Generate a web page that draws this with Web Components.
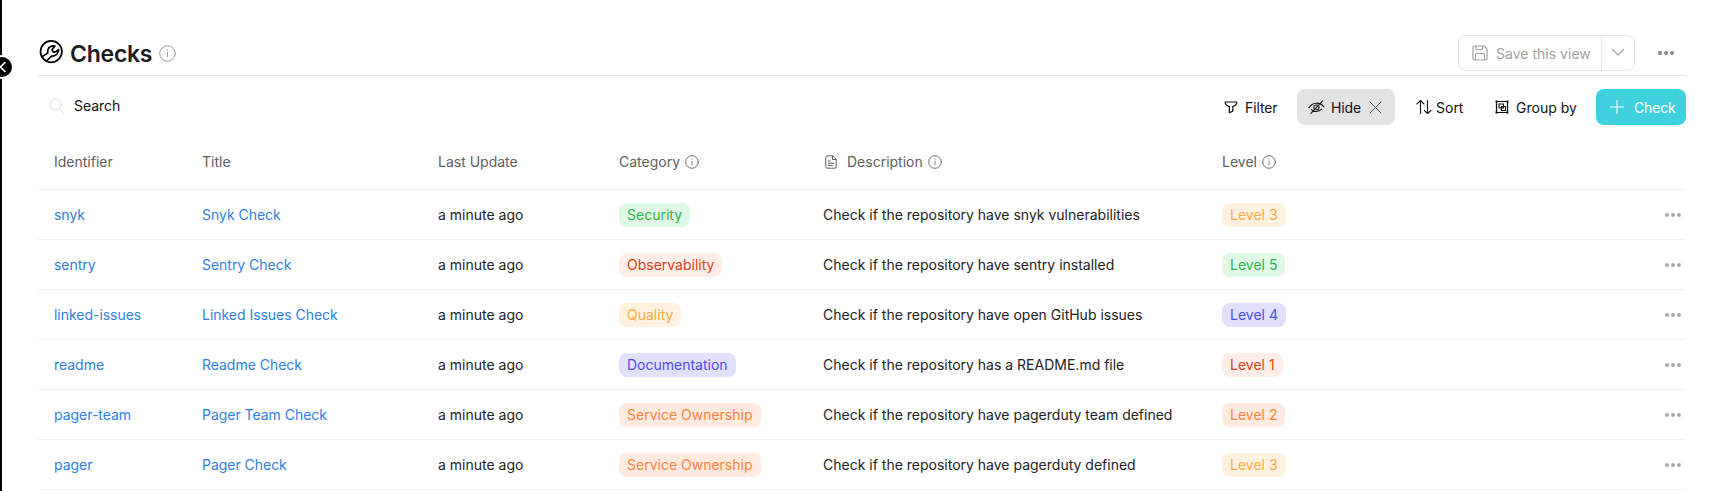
<!DOCTYPE html>
<html lang="en">
<head>
<meta charset="utf-8">
<title>Checks</title>
<style>
body{margin:0;background:#fff;font:14px/20px Inter,"Liberation Sans",sans-serif;color:#222;overflow:hidden}
</style>
</head>
<body>
<checks-page></checks-page>
<script>
const svg = (w, h, sw, body) => `<svg width="${w}" height="${h}" viewBox="0 0 ${w} ${h}" fill="none" stroke="currentColor" stroke-width="${sw}" stroke-linecap="round" stroke-linejoin="round">${body}</svg>`;
const ICONS = {
  wrench: svg(24, 24, 1.7, '<circle cx="12.2" cy="11.600" r="10.7"/><path d="M2.800 16.800L8 13.600C9.400 12.800 8.200 11.400 9.200 9C10.200 6.800 13 5.600 16 6L12.900 9.800L14.400 12.200L17 11.600L19.600 9.600C19.600 13.200 17 16.200 12.600 16.200L7.400 21"/>'),
  info17: svg(17, 17, 1, '<circle cx="8.5" cy="8.5" r="7.8"/><path d="M8.5 7.400v4.500M8.500 4.900v.3"/>'),
  info: svg(14, 14, 0.9, '<circle cx="7" cy="7" r="6.3"/><path d="M7 6.200v3.700M7 4v.2" stroke-width=".8"/>'),
  search: svg(16, 16, 1, '<circle cx="6.5" cy="6.5" r="5.6"/><path d="M10.6 10.6L15 15"/>'),
  filter: svg(14, 14, 1.2, '<path d="M1.2 2h11.6c.2 2-1.600 3.600-4 4.600v4.600L5.400 12.600V6.600C2.800 5.600 1 4 1.200 2z"/>'),
  hide: svg(17, 14, 1.1, '<path d="M1 7.600C4.400 2 11.800 1.600 16 7M3.400 9.600C5.400 11.800 10 12.600 13.800 9.200M6 8.400C5.400 6 7 4.600 9.400 5M11 6.600C11.400 8.600 10 10 8 9.800M3 13.400L14.600 .8"/>'),
  close: svg(13, 13, 1, '<path d="M1 1l11 11M12 1L1 12"/>'),
  sort: svg(16, 16, 1.100, '<path d="M4.500 14.500V1.500M1 5l3.500-3.500L8 5M11.500 1.500v13M8.500 11.500l3 3 3.500-3"/>'),
  group: svg(14, 14, 1, '<path d="M2 1.500h10M2 12.500h10M1.500 2v10M12.500 2v10" stroke-width="1.200"/><g fill="currentColor" stroke="none"><path d="M.5 .5h2v2h-2zM11.500 .5h2v2h-2zM.5 11.500h2v2h-2zM11.500 11.500h2v2h-2z"/></g><path d="M4 4h4.500v4H4zM6.500 6.500h4v4h-4z" stroke-width="1.100" stroke-linejoin="miter"/>'),
  plus: svg(14, 14, 1, '<path d="M7 0v14M0 7h14"/>'),
  save: svg(16, 16, 1.200, '<path d="M1 2.500A1.500 1.500 0 0 1 2.500 1H12l3 3v9.500a1.500 1.500 0 0 1-1.500 1.500h-11A1.500 1.500 0 0 1 1 13.500zM4 1v3.500h6.500V1M3.500 15V9.500A1 1 0 0 1 4.500 8.500h7a1 1 0 0 1 1 1V15"/>'),
  down: svg(14, 9, 1.200, '<path d="M1.500 1.500L7 7.200l5.500-5.700"/>'),
  left: svg(12, 12, 1.600, '<path d="M5 1.500L.5 6 5 10.500"/>'),
  doc: svg(12, 14, 1, '<path d="M.8 2A1.200 1.200 0 0 1 2 .8h5.500l3.700 3.700V12a1.200 1.200 0 0 1-1.200 1.200H2A1.200 1.200 0 0 1 .8 12zM7.500 .8v3.700h3.700M3.300 6h2M3.300 8.200h5.400M3.300 10.400h4"/>'),
  dots: '<svg width="16" height="4" viewBox="0 0 16 4" fill="currentColor"><circle cx="2" cy="2" r="2"/><circle cx="8" cy="2" r="2"/><circle cx="14" cy="2" r="2"/></svg>'
};
const define = (name, html) => customElements.define(name, class extends HTMLElement {
  constructor() {
    super();
    this.attachShadow({ mode: "open" }).innerHTML = typeof html === "function" ? html(this) : html;
  }
});

define("ui-icon", el => `<style>:host{display:inline-flex;flex:none}svg{display:block}</style>${ICONS[el.getAttribute("name")]}`);

define("side-rail", `<style>
:host{position:relative;display:block;width:2px;background:#000}
div{position:absolute;left:-10px;top:55px;width:20px;height:20px;border:2px solid #fff;border-radius:50%;background:#000;color:#fff;display:flex;align-items:center;justify-content:flex-end}
</style><div><ui-icon name="left"></ui-icon></div>`);

define("page-title", `<style>
:host{display:flex;align-items:center;height:36px}
h1{margin:0 0 0 7px;font:600 23px/30px Inter,"Liberation Sans",sans-serif;letter-spacing:-.25px;color:#1c1c1c;width:89px;padding-top:1px}
.w{color:#000;padding:0 0 3px 1px}
.i{color:#999}
</style><ui-icon class="w" name="wrench"></ui-icon><h1><slot></slot></h1><ui-icon class="i" name="info17"></ui-icon>`);

define("save-view", `<style>
:host{display:flex;box-sizing:border-box;width:177px;height:36px;border:1px solid #e6e6e6;border-radius:8px;color:#a3a3a3;letter-spacing:.02px}
.l{display:flex;align-items:center;padding:1px 0 0 13px;gap:8px;width:129px;border-right:1px solid #e6e6e6;white-space:nowrap}
.l ui-icon{margin:-1px 0 0 0}
.r{flex:1;display:flex;align-items:center;justify-content:center;padding-bottom:2px}
</style><div class="l"><ui-icon name="save"></ui-icon><slot></slot></div><div class="r"><ui-icon name="down"></ui-icon></div>`);

define("tool-button", `<style>
:host{display:flex;box-sizing:border-box;align-items:center;height:36px;padding-top:2px;border-radius:8px;color:#111;white-space:nowrap}
:host([active]){background:#e3e3e3}
:host([primary]){background:#40d1df;color:#fff}
::slotted(ui-icon){margin-top:-2px}
</style><slot></slot>`);

define("color-tag", `<style>
:host{display:inline-block;height:24px;line-height:24px;padding:0 8px;border-radius:8px}
:host([c=green]){color:#2fb34f;background:#e0f8e6}
:host([c=red]){color:#e53e16;background:#ffede8}
:host([c=yellow]){color:#ffab42;background:#fff1df}
:host([c=blue]){color:#4f4cf0;background:#e1e0ff}
:host([c=orange]){color:#ff833b;background:#ffeae0}
</style><slot></slot>`);

define("data-row", `<style>
:host{display:grid;grid-template-columns:148px 236px 181px 204px 399px 438px 42px;height:50px;box-sizing:border-box;border-bottom:1px solid #f1f1f1;align-items:center}
:host([head]){height:55px;color:#606060}
::slotted(*){padding-left:16px;white-space:nowrap;display:flex;align-items:center}
</style><slot></slot>`);

const rows = [
  ["snyk", "Snyk Check", "green", "Security", "have snyk vulnerabilities", "yellow", 3],
  ["sentry", "Sentry Check", "red", "Observability", "have sentry installed", "green", 5],
  ["linked-issues", "Linked Issues Check", "yellow", "Quality", "have open GitHub issues", "blue", 4],
  ["readme", "Readme Check", "blue", "Documentation", "has a README.md file", "red", 1],
  ["pager-team", "Pager Team Check", "orange", "Service Ownership", "have pagerduty team defined", "orange", 2],
  ["pager", "Pager Check", "orange", "Service Ownership", "have pagerduty defined", "yellow", 3]
];
define("checks-table", `<style>
:host{display:block}
.link{color:#2f80e0;letter-spacing:-.03px}
.more{color:#aaa;padding-left:20.5px}
.info{margin-left:5px}
.doc{margin:0 10px 0 2px}
</style>
<data-row head><div>Identifier</div><div>Title</div><div>Last Update</div>
<div>Category<ui-icon class="info" name="info"></ui-icon></div>
<div><ui-icon class="doc" name="doc"></ui-icon>Description<ui-icon class="info" name="info"></ui-icon></div>
<div>Level<ui-icon class="info" name="info"></ui-icon></div></data-row>
${rows.map(r => `<data-row><div class="link">${r[0]}</div><div class="link">${r[1]}</div><div>a minute ago</div><div><color-tag c="${r[2]}">${r[3]}</color-tag></div><div>Check if the repository ${r[4]}</div><div><color-tag c="${r[5]}">Level ${r[6]}</color-tag></div><div class="more"><ui-icon name="dots"></ui-icon></div></data-row>`).join("")}`);

define("checks-page", `<style>
:host{display:flex;height:491px;overflow:hidden}
main{width:1648px;margin-left:36px}
header{display:flex;align-items:center;box-sizing:border-box;height:76px;padding-top:31px;border-bottom:1px solid #e4e4e4}
save-view{margin-left:auto}
.dots{color:#888;margin:0 12.5px 0 22.5px}
.bar{display:flex;align-items:center;height:36px;padding:13px 0 10px}
.search{display:flex;align-items:center;gap:9px;padding:0 0 3px 11px;margin-right:auto;color:#111;letter-spacing:-.05px}
.search ui-icon{color:#ddd}
.filter{width:74px;gap:7px;padding-left:1px;letter-spacing:-.1px}
.hide{width:98px;gap:6px;padding-left:11px;letter-spacing:-.1px}
.hide .x{color:#555;margin-left:2px}
.sort{width:70px;gap:4px;padding-left:21px}
.group{gap:7px;margin:0 20px 0 10px;width:101px;padding-left:20px}
.check{width:90px;padding-left:14px;gap:10px;letter-spacing:-.15px}
</style>
<side-rail></side-rail>
<main>
<header><page-title>Checks</page-title><save-view>Save this view</save-view><ui-icon class="dots" name="dots"></ui-icon></header>
<div class="bar">
<div class="search"><ui-icon name="search"></ui-icon>Search</div>
<tool-button class="filter"><ui-icon name="filter"></ui-icon>Filter</tool-button>
<tool-button class="hide" active><ui-icon name="hide"></ui-icon>Hide<ui-icon class="x" name="close"></ui-icon></tool-button>
<tool-button class="sort"><ui-icon name="sort"></ui-icon>Sort</tool-button>
<tool-button class="group"><ui-icon name="group"></ui-icon>Group by</tool-button>
<tool-button class="check" primary><ui-icon name="plus"></ui-icon>Check</tool-button>
</div>
<checks-table></checks-table>
</main>`);
</script>
</body>
</html>
